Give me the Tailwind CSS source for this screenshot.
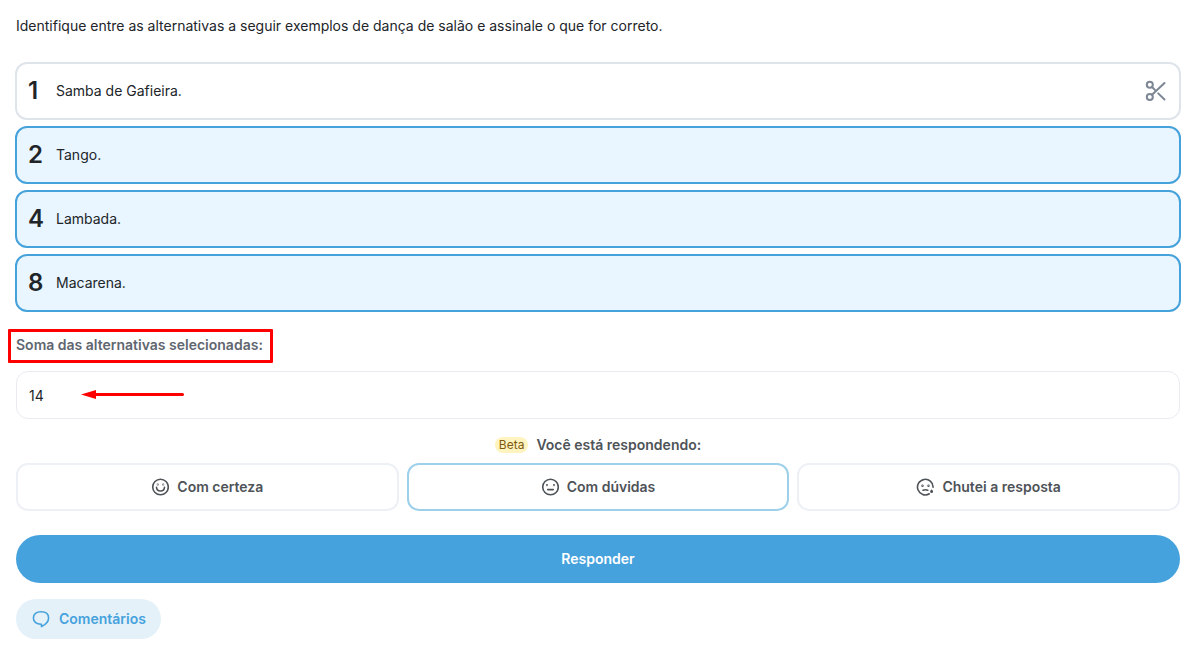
<!DOCTYPE html>
<html lang="pt-BR">
<head>
<meta charset="utf-8">
<meta name="viewport" content="width=device-width, initial-scale=1">
<title>Questão</title>
<script src="https://cdn.jsdelivr.net/npm/@tailwindcss/browser@4"></script>
</head>
<body class="bg-white font-['Inter',sans-serif] text-[14px] leading-6 text-[#212529]">
<main class="pl-4 pr-[14px] pt-[14px] pb-4">
  <p>Identifique entre as alternativas a seguir exemplos de dança de salão e assinale o que for correto.</p>

  <!-- Alternativas -->
  <div class="-mx-px mt-6 flex flex-col gap-1.5">
    <div class="flex h-[58px] items-center rounded-xl border-2 border-[#dfe4eb] pr-[11px]">
      <label class="flex h-full flex-1 items-center pl-[11px]">
        <input type="checkbox" class="sr-only">
        <span class="w-7 text-2xl font-semibold">1</span><span>Samba de Gafieira.</span>
      </label>
      <button type="button" aria-label="Descartar alternativa" class="text-[#7d8794]">
        <svg class="size-6" viewBox="0 0 24 24" fill="none" stroke="currentColor" stroke-width="2" stroke-linecap="round">
          <circle cx="5.800" cy="5.800" r="3"/><circle cx="5.800" cy="18" r="3"/><path d="M8 15.800 20.500 4M8 8l3.400 3.400M14.200 14.400l6.300 6.100"/>
        </svg>
      </button>
    </div>
    <label class="flex h-[58px] items-center rounded-xl border-2 border-[#46a2da] bg-[#e9f6ff] pl-[11px]">
      <input type="checkbox" checked class="sr-only">
      <span class="w-7 text-2xl font-semibold">2</span><span>Tango.</span>
    </label>
    <label class="flex h-[58px] items-center rounded-xl border-2 border-[#46a2da] bg-[#e9f6ff] pl-[11px]">
      <input type="checkbox" checked class="sr-only">
      <span class="w-7 text-2xl font-semibold">4</span><span>Lambada.</span>
    </label>
    <label class="flex h-[58px] items-center rounded-xl border-2 border-[#46a2da] bg-[#e9f6ff] pl-[11px]">
      <input type="checkbox" checked class="sr-only">
      <span class="w-7 text-2xl font-semibold">8</span><span>Macarena.</span>
    </label>
  </div>

  <!-- Soma -->
  <label for="soma" class="-ml-2 mt-[17px] flex h-[34px] w-[265px] items-center whitespace-nowrap rounded-[1px] border-3 border-[#ff0000] pl-[5px] pb-0.5 font-semibold text-[#5f6670]">Soma das alternativas selecionadas:</label>
  <div class="relative mt-2">
    <input id="soma" type="text" value="14" class="block h-12 w-full rounded-xl border border-[#e9ebf1] px-3 text-[#212529]">
    <svg class="pointer-events-none absolute left-16 top-[18px] h-3 w-[105px]" viewBox="0 0 105 12" fill="#f00" aria-hidden="true">
      <path d="M1 5.500 16 1v9z"/><path d="M15 5.500H102.500" stroke="#f00" stroke-width="3" stroke-linecap="round"/>
    </svg>
  </div>

  <!-- Grau de confiança -->
  <div class="mt-4 flex h-5 items-center justify-center gap-2 font-semibold text-[#4e5358]">
    <span class="rounded-full bg-[#fff3bf] px-1 text-[12px] leading-4 font-normal text-[#7c5b10]">Beta</span>
    <span>Você está respondendo:</span>
  </div>
  <div class="mt-2 grid grid-cols-3 gap-2 font-semibold text-[#4e5358]">
    <button type="button" class="flex h-12 items-center justify-center gap-2 rounded-xl border-2 border-[#edf1f5]">
      <svg class="size-[18px]" viewBox="0 0 18 18" fill="none" stroke="currentColor" stroke-width="1.600" stroke-linecap="round"><circle cx="9.500" cy="9" r="7.800"/><path d="M5.500 9.300c.3 5 7.700 5 8 0"/><circle cx="6.800" cy="6.500" r=".3"/><circle cx="12.200" cy="6.500" r=".3"/></svg>
      Com certeza
    </button>
    <button type="button" aria-pressed="true" class="flex h-12 items-center justify-center gap-2 rounded-xl border-2 border-[#9ed0ea]">
      <svg class="size-[18px]" viewBox="0 0 18 18" fill="none" stroke="currentColor" stroke-width="1.600" stroke-linecap="round"><circle cx="9.500" cy="9" r="7.800"/><path d="M6.700 11.600h5.600"/><circle cx="6" cy="7.200" r=".3"/><circle cx="13" cy="7.200" r=".3"/></svg>
      Com dúvidas
    </button>
    <button type="button" class="flex h-12 items-center justify-center gap-2 rounded-xl border-2 border-[#edf1f5]">
      <svg class="size-[18px]" viewBox="0 0 18 18" fill="none" stroke="currentColor" stroke-width="1.600" stroke-linecap="round"><path d="M17.100 9.200A7.800 7.800 0 1 0 13.300 15.800"/><path d="M7 12.200q2.400-1 4.800 0"/><circle cx="6.500" cy="7.700" r=".4"/><circle cx="12.500" cy="7.700" r=".4"/><path d="M15.600 11.200c.9 1 1.500 1.500 1.500 2.200a1.500 1.500 0 0 1-3 0c0-.7.600-1.200 1.500-2.200z" fill="currentColor" stroke="none"/></svg>
      Chutei a resposta
    </button>
  </div>

  <button type="button" class="mt-6 block h-12 w-full rounded-full bg-[#46a2dc] font-semibold text-white">Responder</button>
  <button type="button" class="mt-4 flex h-10 items-center gap-2 rounded-full bg-[#e4f1f9] px-[15px] font-semibold text-[#46a2dc]">
    <svg class="size-5" viewBox="0 0 20 20" fill="none" stroke="currentColor" stroke-width="1.600" stroke-linejoin="round"><path d="M10.500 15.200C5.500 15.400 2.400 12.900 2.400 9S5.400 2.800 10 2.800s7.600 2.300 7.600 6.200c0 3.900-2.800 6.500-7.100 8.600z"/></svg>
    Comentários
  </button>
</main>
</body>
</html>
